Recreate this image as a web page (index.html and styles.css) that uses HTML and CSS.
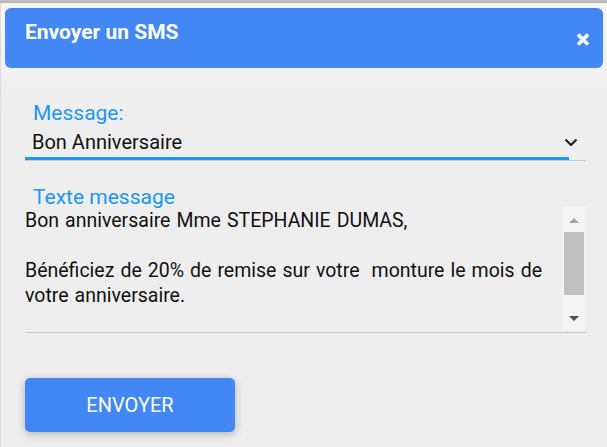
FILE: index.html
```html
<!DOCTYPE html>
<html lang="fr">
<head>
    <meta charset="UTF-8">
    <meta name="viewport" content="width=device-width, initial-scale=1.0">
    <title>Envoyer un SMS</title>
    <link rel="stylesheet" href="styles.css">
</head>
<body>
    <div class="dialogue">
        <div class="entete">
            <span class="titre">Envoyer un SMS</span>
            <svg class="fermer" width="14" height="13" viewBox="0 0 14 13"><path d="M2 1.5 L12 11.5 M12 1.5 L2 11.5" stroke="white" stroke-width="3.6"/></svg>
        </div>
        <div class="formulaire">
            <div class="champ">
                <label class="etiquette">Message:</label>
                <div class="selection">
                    <span>Bon Anniversaire</span>
                    <svg width="14" height="9" viewBox="0 0 14 9"><path d="M1.5 1.5 L7 7 L12.5 1.5" fill="none" stroke="#222" stroke-width="2.2"/></svg>
                </div>
            </div>
            <div class="champ champTexte">
                <label class="etiquette">Texte message</label>
                <div class="zoneTexte">
                    <div class="contenu">Bon anniversaire Mme STEPHANIE DUMAS,<br><br>Bénéficiez de 20% de remise sur votre&nbsp; monture le mois de votre anniversaire.</div>
                    <div class="defilement">
                        <span class="fleche haut"></span>
                        <span class="curseur"></span>
                        <span class="fleche bas"></span>
                    </div>
                </div>
            </div>
            <button class="bouton">ENVOYER</button>
        </div>
    </div>
</body>
</html>
```

FILE: styles.css
```css
body {
    margin: 0;
    background: linear-gradient(#c4c4c4, #b0b0b0 3px);
    font-family: Roboto, "Liberation Sans", sans-serif;
}
.dialogue {
    margin-top: 3px;
    height: 444px;
    box-sizing: border-box;
    border-left: 1px solid #dcdcdc;
    background: linear-gradient(#f6f6f6, #eeeeee 110px);
    padding: 5px 4px 0 4px;
}
.entete {
    height: 60px;
    background-color: #4387f5;
    border-radius: 6px;
    display: flex;
    justify-content: space-between;
    align-items: center;
    padding: 0 13px 0 20px;
    color: white;
}
.titre {
    font-size: 21px;
    line-height: 25px;
    font-weight: 700;
    align-self: flex-start;
    margin-top: 12px;
}
.fermer {
    margin-top: 3px;
}
.formulaire {
    padding: 33px 17px 0 20px;
}
.etiquette {
    display: block;
    color: #2196f3;
    font-size: 21px;
    line-height: 25px;
    padding-left: 8px;
}
.selection {
    display: flex;
    justify-content: space-between;
    align-items: center;
    font-size: 20px;
    line-height: 22px;
    color: #111;
    padding: 5px 8px 7px 7px;
    border-bottom: 1px solid #c8c8c8;
    background: linear-gradient(#2196f3, #2196f3) no-repeat left bottom / calc(100% - 17px) 3px;
}
.champTexte {
    margin-top: 24px;
}
.zoneTexte {
    display: flex;
    border-bottom: 1px solid #c8c8c8;
    height: 124px;
    margin-top: -2px;
}
.contenu {
    flex: 1;
    font-size: 19.5px;
    line-height: 25px;
    word-spacing: 1.2px;
    color: #111;
    padding-right: 14px;
}
.defilement {
    width: 24px;
    margin: -1px 0 2px 0;
    background-color: #f4f4f4;
    display: flex;
    flex-direction: column;
    align-items: center;
}
.fleche {
    width: 0;
    height: 0;
    border-left: 5.5px solid transparent;
    border-right: 5.5px solid transparent;
}
.haut {
    border-bottom: 5px solid #a3a3a3;
    margin: 11px 0 9px 0;
}
.bas {
    border-top: 5px solid #505050;
    margin: auto 0 9px 0;
}
.curseur {
    width: 20px;
    height: 63px;
    background-color: #c1c1c1;
}
.bouton {
    margin-top: 45px;
    width: 210px;
    height: 54px;
    border: none;
    border-radius: 5px;
    background-color: #4387f5;
    color: white;
    font-family: Roboto, "Liberation Sans", sans-serif;
    font-size: 20px;
    box-shadow: 0 2px 8px rgba(0, 0, 0, 0.25);
}
```
